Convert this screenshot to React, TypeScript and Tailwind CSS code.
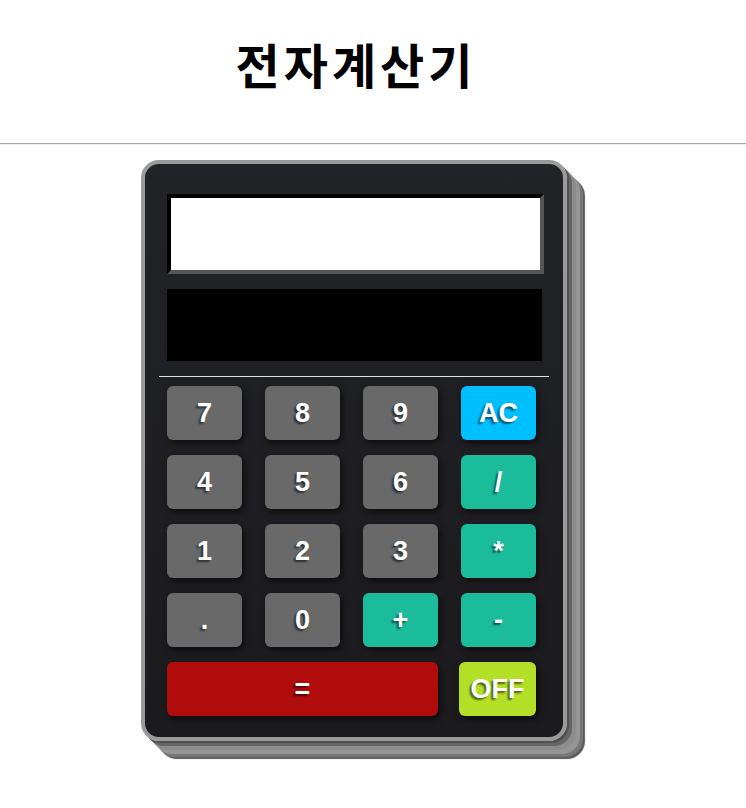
import React from "react";

type Key = {
  label: string;
  color: string;
  span?: string;
};

const keys: Key[] = [
  { label: "7", color: "bg-[#696969]" },
  { label: "8", color: "bg-[#696969]" },
  { label: "9", color: "bg-[#696969]" },
  { label: "AC", color: "bg-[#00bfff]" },
  { label: "4", color: "bg-[#696969]" },
  { label: "5", color: "bg-[#696969]" },
  { label: "6", color: "bg-[#696969]" },
  { label: "/", color: "bg-[#1abc9c]" },
  { label: "1", color: "bg-[#696969]" },
  { label: "2", color: "bg-[#696969]" },
  { label: "3", color: "bg-[#696969]" },
  { label: "*", color: "bg-[#1abc9c]" },
  { label: ".", color: "bg-[#696969]" },
  { label: "0", color: "bg-[#696969]" },
  { label: "+", color: "bg-[#1abc9c]" },
  { label: "-", color: "bg-[#1abc9c]" },
  { label: "=", color: "bg-[#b00c0c]", span: "col-span-3" },
  { label: "OFF", color: "bg-[#b3df27] -ml-[2px]" },
];

export default function App() {
  return (
    <div className="min-h-screen bg-white">
      <div className="h-[143px] w-[708px] pl-[4px] pt-[39px] text-center">
        <h1 className="text-[48px] font-bold leading-none tracking-[4px] text-black [font-family:'Noto_Sans_CJK_KR',sans-serif]">
          전자계산기
        </h1>
      </div>
      <hr className="border-0 border-t border-t-[#a6a6a6] border-b border-b-[#efefef]" />

      <div className="w-[708px] pt-[15px]">
        <Calculator />
      </div>
    </div>
  );
}

function Calculator() {
  return (
    <div className="mx-auto flex w-[426px] flex-col rounded-[18px] border-4 border-[#9a9a9a] bg-gradient-to-b from-[#222327] to-[#1b1b1e] pb-[21px] pt-[30px] shadow-[2px_2px_0_#505050,5px_5px_0_#666,9px_9px_0_#8c8c8c,13px_13px_0_#959595,16px_16px_0_#777,18px_18px_1px_#5a5a5a]">
      <div className="ml-[22px] h-[80px] w-[377px] border-4 border-t-black border-l-black border-r-[#555] border-b-[#555] bg-white" />
      <div className="ml-[22px] mt-[15px] h-[72px] w-[375px] bg-black" />
      <div className="mx-[14px] mt-[15px] h-px bg-[#e0e0e0]" />

      <div className="ml-[22px] mt-[9px] grid grid-cols-[75px_75px_75px_75px] gap-x-[23px] gap-y-[15px]">
        {keys.map((key) => (
          <button
            key={key.label}
            className={`flex h-[54px] items-center justify-center rounded-[6px] text-[27px] font-bold text-white shadow-[2px_3px_6px_rgba(0,0,0,0.6)] [font-family:'Liberation_Sans',Arial,sans-serif] [text-shadow:-2px_2px_2px_rgba(0,0,0,0.55)] ${key.color} ${key.span ?? ""}`}
          >
            {key.label}
          </button>
        ))}
      </div>
    </div>
  );
}
